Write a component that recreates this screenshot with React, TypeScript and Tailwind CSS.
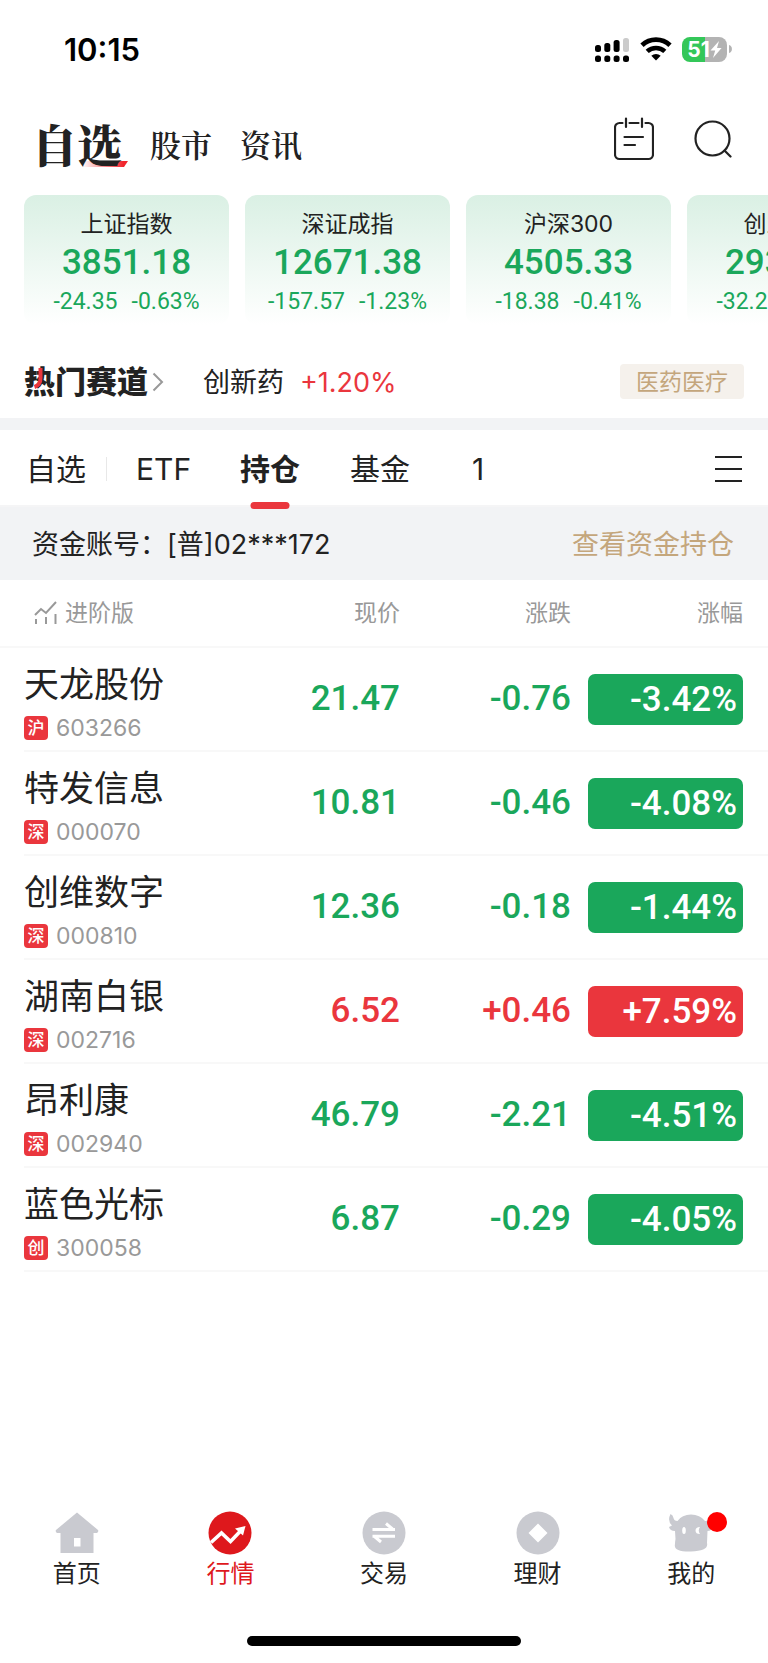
const indices = [
  { name: "上证指数", value: "3851.18", change: "-24.35", percent: "-0.63%" },
  { name: "深证成指", value: "12671.38", change: "-157.57", percent: "-1.23%" },
  { name: "沪深300", value: "4505.33", change: "-18.38", percent: "-0.41%" },
  { name: "创业板指", value: "2935.26", change: "-32.26", percent: "-1.09%" },
];

const stocks = [
  { name: "天龙股份", market: "沪", code: "603266", price: "21.47", change: "-0.76", percent: "-3.42%" },
  { name: "特发信息", market: "深", code: "000070", price: "10.81", change: "-0.46", percent: "-4.08%" },
  { name: "创维数字", market: "深", code: "000810", price: "12.36", change: "-0.18", percent: "-1.44%" },
  { name: "湖南白银", market: "深", code: "002716", price: "6.52", change: "+0.46", percent: "+7.59%" },
  { name: "昂利康", market: "深", code: "002940", price: "46.79", change: "-2.21", percent: "-4.51%" },
  { name: "蓝色光标", market: "创", code: "300058", price: "6.87", change: "-0.29", percent: "-4.05%" },
];

const StatusBar = () => (
  <div className="flex h-[98px] items-center justify-between pl-16 pr-9">
    <span className="text-[31px] leading-none font-semibold text-black">10:15</span>
    <div className="flex items-center gap-[10px]">
      <svg width="35" height="25" viewBox="0 0 35 25">
        <rect x="0" y="8" width="6" height="7" rx="2.5" />
        <rect x="9.3" y="6" width="6" height="9" rx="2.5" />
        <rect x="18.6" y="3" width="6" height="12" rx="2.5" />
        <rect x="28" y="1" width="6" height="14" rx="2.5" fill="#cbcbcb" />
        <rect x="0" y="18.5" width="6" height="6.5" rx="2.5" />
        <rect x="9.3" y="18.5" width="6" height="6.5" rx="2.5" />
        <rect x="18.6" y="18.5" width="6" height="6.5" rx="2.5" />
        <rect x="28" y="18.5" width="6" height="6.5" rx="2.5" />
      </svg>
      <svg width="32" height="24" viewBox="0 0 32 24">
        <path d="M2 8.2a20.5 20.5 0 0 1 28 0" fill="none" stroke="#000" strokeWidth="4.8" />
        <path d="M7.2 14.4a13 13 0 0 1 17.6 0" fill="none" stroke="#000" strokeWidth="4.6" />
        <path d="M11.3 18.8a7 7 0 0 1 9.4 0L16 23.6z" />
      </svg>
      <div className="flex items-center gap-[2px]">
        <div className="flex h-[25px] w-[45px] items-center justify-center rounded-lg bg-[linear-gradient(90deg,#34c759_51%,#b3b3b3_51%)]">
          <span className="text-[21px] leading-none font-bold text-white">51</span>
          <svg width="12" height="17" viewBox="0 0 12 17" fill="#fff">
            <path d="M9 0 0.5 9.6h4.7L3 17l8.6-10H7z" />
          </svg>
        </div>
        <svg width="3" height="8" viewBox="0 0 3 8" fill="#b3b3b3">
          <path d="M0 0a4.2 4.2 0 0 1 0 8z" />
        </svg>
      </div>
    </div>
  </div>
);

const Header = () => (
  <header className="flex h-[97px] items-start justify-between pl-8 pr-9 pt-4">
    <nav className="flex items-center gap-7 font-['Noto_Serif_CJK_SC','Noto_Sans_CJK_SC',serif] text-[#222]">
      <a href="#watch" className="relative text-[45px] leading-[58px] font-black">
        <svg className="absolute right-[-6px] bottom-[6px]" width="46" height="6" viewBox="0 0 46 6">
          <defs>
            <linearGradient id="underline">
              <stop offset="0" stopColor="#f0262d" stopOpacity="0" />
              <stop offset="0.9" stopColor="#f0262d" />
            </linearGradient>
          </defs>
          <path d="M0 0h46l-4 6H0z" fill="url(#underline)" />
        </svg>
        <span className="relative">自选</span>
      </a>
      <a href="#market" className="text-[31px] leading-[60px] font-semibold">股市</a>
      <a href="#news" className="text-[31px] leading-[60px] font-semibold">资讯</a>
    </nav>
    <div className="flex items-center gap-10 pt-[3px]">
      <button aria-label="日历">
        <svg width="40" height="44" viewBox="0 0 40 44" fill="none" stroke="#222" strokeWidth="2.2" strokeLinecap="round">
          <path d="M8.5 6H5.5A4.5 4.500 0 0 0 1 10.500v27a4.500 4.500 0 0 0 4.500 4.500h29a4.500 4.500 0 0 0 4.500-4.500v-27A4.500 4.500 0 0 0 34.500 6h-3M15.500 6h9M12 1.500V10M28 1.500V10M10.500 20h18.500M10.500 28h10.500" />
        </svg>
      </button>
      <button aria-label="搜索">
        <svg width="38" height="38" viewBox="0 0 38 38" fill="none" stroke="#222" strokeWidth="2.2" strokeLinecap="round">
          <circle cx="18.500" cy="18.500" r="17" />
          <path d="m30.500 30.500 6 6" />
        </svg>
      </button>
    </div>
  </header>
);

const IndexCards = () => (
  <section className="flex gap-4 overflow-x-auto pl-6 [scrollbar-width:none]">
    {indices.map((item) => (
      <div
        key={item.name}
        className="flex h-[130px] w-[205px] shrink-0 flex-col items-center rounded-xl bg-linear-to-b from-[#daf0e4] to-white pt-[13px] font-['Roboto','Noto_Sans_CJK_SC',sans-serif] text-[#1aa75b]"
      >
        <div className="font-['Inter','Noto_Sans_CJK_SC',sans-serif] text-[23px] leading-8 text-[#222]">
          {item.name}
        </div>
        <div className="text-[35px] leading-[46px] font-medium">{item.value}</div>
        <div className="flex gap-[14px] text-[23px] leading-8">
          <span>{item.change}</span>
          <span>{item.percent}</span>
        </div>
      </div>
    ))}
  </section>
);

const HotTrack = () => (
  <section className="mt-5 flex h-[73px] items-center px-6">
    <a href="#hot" className="relative flex items-center gap-1 text-[31px] leading-10 font-black text-[#222]">
      热门赛道
      <svg className="absolute top-[5px] left-[9px]" width="11" height="24" viewBox="0 0 11 24" fill="none" stroke="#ea363d" strokeWidth="4">
        <path d="M7.500 1v10q0 7-6 9" />
      </svg>
      <svg width="12" height="20" viewBox="0 0 12 20" fill="none" stroke="#999" strokeWidth="2">
        <path d="m1.500 1.500 8.500 8.500-8.500 8.500" />
      </svg>
    </a>
    <span className="ml-[39px] pt-[3px] text-[27px] text-[#222]">创新药</span>
    <span className="ml-4 pt-[3px] text-[27px] text-[#ea363d]">+1.20%</span>
    <a href="#medical" className="ml-auto rounded bg-[#f5f1ec] px-4 pt-px text-[23px] leading-[34px] text-[#c4a67c]">
      医药医疗
    </a>
  </section>
);

const Tabs = () => (
  <nav className="flex h-[77px] items-stretch border-b-2 border-[#f5f5f6] pt-[3px] pl-[26px] pr-[25px] text-[30px] text-[#222]">
    <button className="w-[60px]">自选</button>
    <span className="mx-5 my-auto h-6 w-px bg-[#e8e8e8]" />
    <button className="ml-[9px]">ETF</button>
    <button className="relative ml-[49px] font-bold">
      持仓
      <span className="absolute -bottom-1 left-1/2 h-[7px] w-[39px] -translate-x-1/2 rounded-full bg-[#ea363d]" />
    </button>
    <button className="ml-[50px]">基金</button>
    <button className="ml-[62px]">1</button>
    <button className="ml-auto" aria-label="菜单">
      <svg width="29" height="28" viewBox="0 0 29 28" stroke="#222" strokeWidth="2">
        <path d="M1 2h27M1 14h27M1 26h27" />
      </svg>
    </button>
  </nav>
);

const StockTable = () => (
  <table className="w-full table-fixed text-right">
    <thead className="text-[23px] text-[#999]">
      <tr className="h-[67px] border-b-2 border-[#f8f8f8]">
        <th className="p-0 pl-[34px] text-left font-normal">
          <span className="flex items-center gap-[7px]">
            <svg width="24" height="24" viewBox="0 0 24 24" fill="none" stroke="#999" strokeWidth="2">
              <path d="M1 14l6-6 5 4L22 1M2 18v5M12 16v7M21.500 13v10" />
            </svg>
            进阶版
          </span>
        </th>
        <th className="w-[150px] p-0 font-normal">现价</th>
        <th className="w-[171px] p-0 font-normal">涨跌</th>
        <th className="w-[197px] p-0 pr-[25px] font-normal">涨幅</th>
      </tr>
    </thead>
    <tbody className="font-['Roboto','Noto_Sans_CJK_SC',sans-serif] text-[35px] font-medium">
      {stocks.map((stock) => {
        const up = stock.change.startsWith("+");
        const color = up ? "text-[#ea363d]" : "text-[#1aa75b]";
        const cell = "flex h-[104px] items-center justify-end border-b-2 border-[#f8f8f8]";
        return (
          <tr key={stock.code}>
            <td className="p-0 text-left font-['Inter','Noto_Sans_CJK_SC',sans-serif] font-normal">
              <div className="ml-6 flex h-[104px] flex-col border-b-2 border-[#f8f8f8] pt-3">
                <div className="text-[35px] leading-[48px] text-[#222]">{stock.name}</div>
                <div className="flex items-center gap-2 pt-1">
                  <span className="size-6 rounded bg-[#ea363d] text-center text-[17px] leading-6 font-medium text-white">
                    {stock.market}
                  </span>
                  <span className="text-[23px] leading-8 text-[#999]">{stock.code}</span>
                </div>
              </div>
            </td>
            <td className="p-0">
              <div className={`${cell} ${color}`}>{stock.price}</div>
            </td>
            <td className="p-0">
              <div className={`${cell} ${color}`}>{stock.change}</div>
            </td>
            <td className="p-0">
              <div className={`${cell} pr-[25px] text-white`}>
                <span
                  className={`w-[155px] rounded-[7px] pr-[6px] leading-[51px] ${
                    up ? "bg-[#ea363d]" : "bg-[#1aa75b]"
                  }`}
                >
                  {stock.percent}
                </span>
              </div>
            </td>
          </tr>
        );
      })}
    </tbody>
  </table>
);

const navItems = [
  {
    label: "首页",
    icon: (
      <path d="M22 1.500 43 19q1 1.500-1 3h-3.500v20h-33V22H2q-2-1.500-1-3zM19 27v8.500h6.500V27z" fill="#c9cad0" fillRule="evenodd" />
    ),
  },
  {
    label: "行情",
    active: true,
    icon: (
      <>
        <circle cx="22" cy="22" r="21.500" fill="#de181c" />
        <path d="m3 31.500 10.500-9.500 9 8.500L33 19.500" fill="none" stroke="#fff" strokeWidth="3.600" />
        <path d="m37.500 15-10.500 2.500 8 7z" fill="#fff" />
      </>
    ),
  },
  {
    label: "交易",
    icon: (
      <>
        <circle cx="22" cy="22" r="21.500" fill="#c9cad0" />
        <path d="M10.500 18.400h22.500M24 12.500l6.500 5.500M33 25.300H10.500M19 31l-6.500-5.500" fill="none" stroke="#fff" strokeWidth="3" />
      </>
    ),
  },
  {
    label: "理财",
    icon: (
      <>
        <circle cx="22" cy="22" r="21.500" fill="#c9cad0" />
        <path d="m22 12.500 9.500 9.500-9.500 9.500-9.500-9.500z" fill="#fff" />
      </>
    ),
  },
  {
    label: "我的",
    badge: true,
    icon: (
      <>
        <path
          d="M1.500 3Q4 4 4.500 7t4 3Q13 3.500 22 3.500T36 10q3 .500 4-3t3-4q2 6-1 10.500l2 1.500q-1 5-5.500 5l-.500 12q2 8-16 8.500T6 33q0-2 .500-5L6 20q-5 0-6-4l3-1.500Q-2 10 1.500 3z"
          fill="#c9cad0"
        />
        <ellipse cx="15" cy="19.500" rx="1.800" ry="3.500" fill="#fff" />
        <path d="M31 16q-4.500 0-4.500 3.500T31 23q-2.500-3.500 0-7z" fill="#fff" />
      </>
    ),
  },
];

const BottomNav = () => (
  <footer className="pb-[17px]">
    <nav className="grid grid-cols-5">
      {navItems.map((item) => (
        <a
          key={item.label}
          href={`#${item.label}`}
          className={`flex flex-col items-center text-[24px] leading-[38px] ${item.active ? "text-[#de181c]" : "text-[#222]"}`}
        >
          <span className="relative h-11">
            <svg width="44" height="44" viewBox="0 0 44 44">
              {item.icon}
            </svg>
            {item.badge && <span className="absolute top-px -right-[14px] size-5 rounded-full bg-[#ff0000]" />}
          </span>
          {item.label}
        </a>
      ))}
    </nav>
    <div className="mx-auto mt-[43px] h-[10px] w-[274px] rounded-full bg-black" />
  </footer>
);

export default function App() {
  return (
    <div className="flex min-h-screen flex-col bg-white font-['Inter','Noto_Sans_CJK_SC',sans-serif]">
      <StatusBar />
      <Header />
      <main className="flex-1">
        <IndexCards />
        <HotTrack />
        <div className="h-3 bg-[#f2f3f5]" />
        <Tabs />
        <div className="flex h-[73px] items-center justify-between bg-[#f2f3f5] pt-[3px] pl-8 pr-[34px] text-[27px]">
          <span className="text-[#222]">资金账号：[普]02***172</span>
          <a href="#funds" className="text-[#c4a67c]">查看资金持仓</a>
        </div>
        <StockTable />
      </main>
      <BottomNav />
    </div>
  );
}
